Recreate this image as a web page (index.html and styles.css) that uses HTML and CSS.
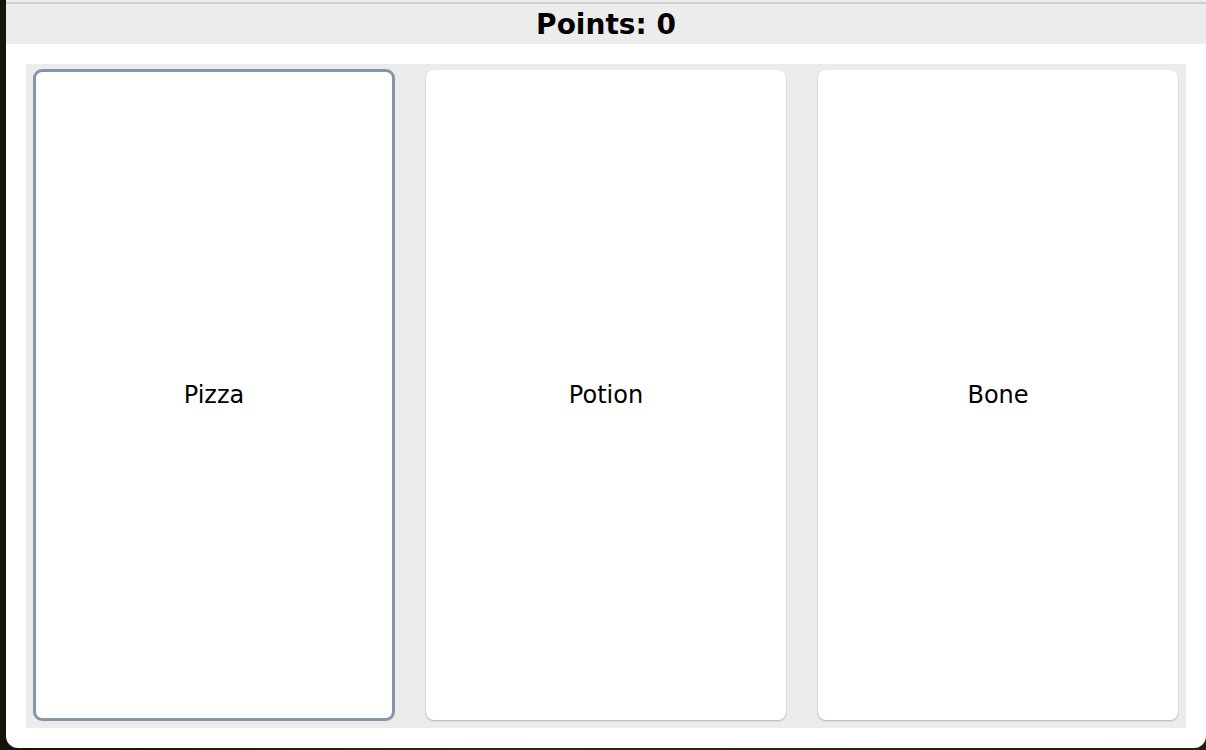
FILE: index.html
```html
<!DOCTYPE html>
<html>
<head>
<meta charset="utf-8">
<link rel="stylesheet" href="styles.css">
<title>Points</title>
</head>
<body>
<div class="window">
  <div class="titlebar"></div>
  <div class="header">Points: 0</div>
  <div class="content">
    <div class="panel">
      <div class="card selected">Pizza</div>
      <div class="card">Potion</div>
      <div class="card">Bone</div>
    </div>
  </div>
</div>
</body>
</html>
```
FILE: styles.css
```css
html, body {
  margin: 0;
  padding: 0;
}
body {
  width: 1206px;
  height: 750px;
  overflow: hidden;
  background: linear-gradient(90deg, #141408 0%, #2c2b12 40%, #1f2010 100%);
  font-family: "DejaVu Sans", "Liberation Sans", sans-serif;
}
.window {
  margin-left: 6px;
  width: 1200px;
  height: 748px;
  background: #ffffff;
  border-radius: 0 0 12px 12px;
  display: flex;
  flex-direction: column;
  overflow: hidden;
}
.titlebar {
  height: 2px;
  background: #ececec;
  border-bottom: 2px solid #cdcdcd;
}
.header {
  height: 40px;
  background: #ececec;
  display: flex;
  align-items: center;
  justify-content: center;
  font-weight: bold;
  font-size: 28px;
  color: #000;
}
.content {
  flex: 1;
  padding: 20px;
  display: flex;
}
.panel {
  flex: 1;
  background: #ececec;
  padding: 6px 8px 8px 8px;
  display: grid;
  grid-template-columns: repeat(3, 1fr);
  column-gap: 32px;
}
.card {
  background: #ffffff;
  border-radius: 8px;
  box-shadow: 0 1px 2px rgba(0, 0, 0, 0.25);
  display: flex;
  align-items: center;
  justify-content: center;
  font-size: 24px;
  color: #000;
}
.card.selected {
  margin: -1px;
  border: 3px solid #8795ac;
  border-radius: 9px;
  box-shadow: none;
}
```
